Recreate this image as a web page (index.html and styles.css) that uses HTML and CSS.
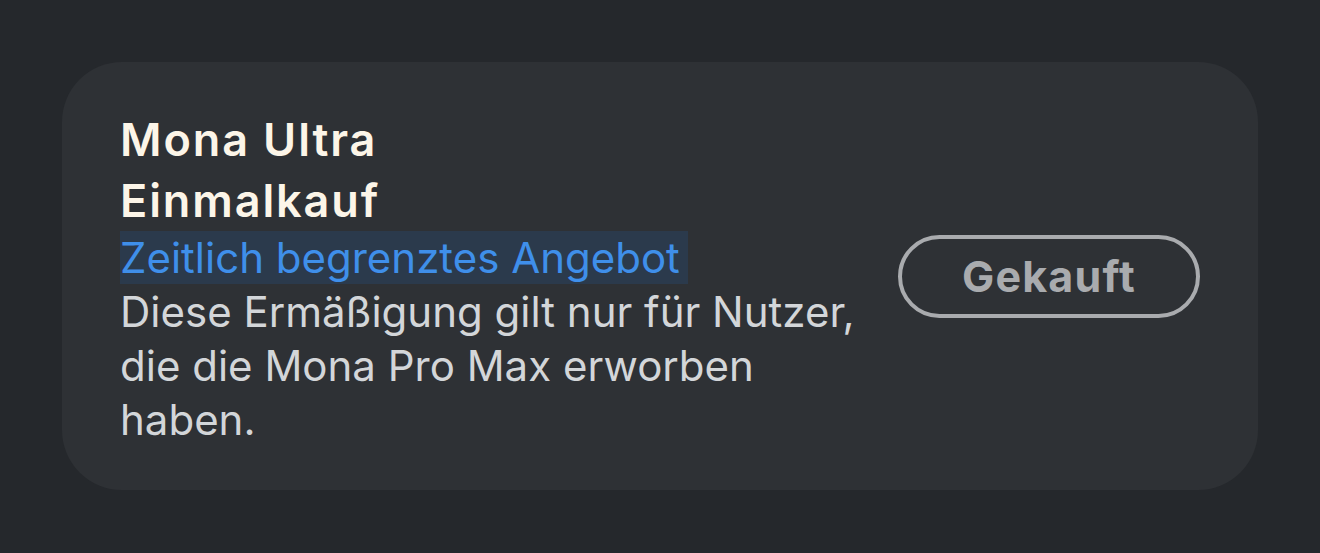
FILE: index.html
```html
<!DOCTYPE html>
<html lang="de">
<head>
<meta charset="utf-8">
<link rel="stylesheet" href="styles.css">
</head>
<body>
<div class="card">
  <div class="info">
    <div class="title">Mona Ultra<br>Einmalkauf</div>
    <div class="offer"><span class="hl">Zeitlich begrenztes Angebot</span></div>
    <div class="desc">Diese Ermäßigung gilt nur für Nutzer, die die Mona Pro Max erworben haben.</div>
  </div>
  <div class="action">
    <button class="btn">Gekauft</button>
  </div>
</div>
</body>
</html>
```

FILE: styles.css
```css
html, body {
  margin: 0;
  padding: 0;
  background: #25282c;
  height: 100%;
}
body {
  padding: 62px;
  box-sizing: border-box;
  font-family: Inter, "Noto Sans", "Liberation Sans", sans-serif;
}
.card {
  width: 1196px;
  height: 428px;
  background: #2e3135;
  border-radius: 60px;
  box-sizing: border-box;
  padding: 4px 58px 0;
  display: flex;
  align-items: center;
}
.info {
  width: 745px;
  display: flex;
  flex-direction: column;
}
.title {
  color: #fcf5e8;
  font-size: 45px;
  font-weight: 600;
  letter-spacing: 1.9px;
  line-height: 61px;
}
.offer {
  font-size: 42px;
  line-height: 54px;
  color: #3f8fea;
}
.hl {
  display: inline-block;
  line-height: 53px;
  background: #2b3a4c;
  padding-right: 8px;
}
.desc {
  color: #d3d6d9;
  font-size: 42px;
  line-height: 54px;
}
.action {
  flex: 1;
  display: flex;
  justify-content: flex-end;
  margin-top: -4px;
}
.btn {
  width: 302px;
  height: 83px;
  border: 4px solid #a9abae;
  border-radius: 42px;
  background: transparent;
  color: #a9abae;
  font-family: Inter, "Noto Sans", "Liberation Sans", sans-serif;
  font-size: 43px;
  font-weight: 700;
  letter-spacing: 1.2px;
  padding: 0;
}
```
